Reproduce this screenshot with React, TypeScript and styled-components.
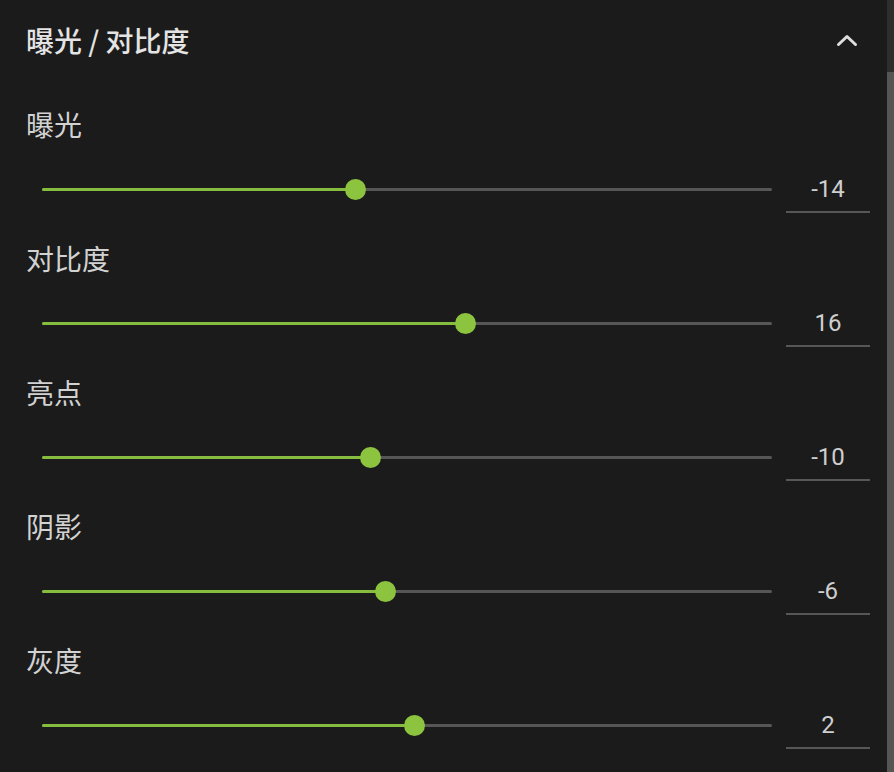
import React from "react";
import styled, { createGlobalStyle } from "styled-components";

const GlobalStyle = createGlobalStyle`
  html, body {
    margin: 0;
    padding: 0;
    background: #1b1b1b;
  }
  body {
    font-family: "Noto Sans CJK SC", "Noto Sans", sans-serif;
  }
`;

const adjustments = [
  { label: "曝光", value: -14 },
  { label: "对比度", value: 16 },
  { label: "亮点", value: -10 },
  { label: "阴影", value: -6 },
  { label: "灰度", value: 2 },
];

const Page = styled.div`
  display: flex;
  flex-flow: row nowrap;
  width: 894px;
  height: 772px;
  background: #1b1b1b;
  overflow: hidden;
`;

const Panel = styled.div`
  flex: 1;
  display: flex;
  flex-direction: column;
  padding: 0 17px 0 26px;
`;

const Header = styled.div`
  height: 82px;
  display: flex;
  align-items: center;
  justify-content: space-between;
  padding-bottom: 3px;
  box-sizing: border-box;
`;

const Title = styled.h2`
  margin: 0;
  font-size: 28px;
  font-weight: 500;
  color: #e4e4e4;
  line-height: 30px;
`;

const Chevron = styled.svg`
  width: 22px;
  height: 14px;
  margin-right: 12px;
`;

const Group = styled.div`
  height: 134px;
  display: flex;
  flex-direction: column;
`;

const Label = styled.div`
  margin-top: 27px;
  font-size: 28px;
  line-height: 30px;
  color: #d2d2d2;
`;

const SliderRow = styled.div`
  margin-top: 26px;
  display: flex;
  flex-flow: row nowrap;
  align-items: flex-start;
`;

const TrackArea = styled.div`
  flex: 1;
  height: 48px;
  margin: 0 14px 0 16px;
  display: flex;
  align-items: center;
`;

const Track = styled.div`
  position: relative;
  width: 100%;
  height: 3px;
  border-radius: 2px;
  background: #565656;
`;

const Fill = styled.div`
  height: 100%;
  border-radius: 2px;
  background: #86bd3e;
`;

const Thumb = styled.div`
  position: absolute;
  top: 50%;
  width: 21px;
  height: 21px;
  margin: -10.5px 0 0 -10.5px;
  border-radius: 50%;
  background: #8cc43f;
`;

const ValueBox = styled.div`
  width: 84px;
  height: 48px;
  box-sizing: border-box;
  padding-top: 12px;
  border-bottom: 2px solid #575757;
  text-align: center;
  font-family: Roboto, "Noto Sans", sans-serif;
  font-size: 24px;
  line-height: 24px;
  color: #cfcfcf;
`;

const Scrollbar = styled.div`
  width: 7px;
  display: flex;
  flex-direction: column;
  background: #2e2e2e;
`;

const ScrollThumb = styled.div`
  margin-top: 72px;
  flex: 1;
  background: #555555;
`;

const Slider = ({ value }: { value: number }) => {
  const pct = ((value + 100) / 200) * 100;
  return (
    <Track>
      <Fill style={{ width: `${pct}%` }} />
      <Thumb style={{ left: `${pct}%` }} />
    </Track>
  );
};

const App = () => {
  return (
    <>
      <GlobalStyle />
      <Page>
        <Panel>
          <Header>
            <Title>曝光 / 对比度</Title>
            <Chevron viewBox="0 0 22 14">
              <path
                d="M2.5 11.5 L11 3.5 L19.5 11.5"
                fill="none"
                stroke="#dedede"
                strokeWidth="3"
                strokeLinecap="round"
                strokeLinejoin="round"
              />
            </Chevron>
          </Header>
          {adjustments.map((a) => (
            <Group key={a.label}>
              <Label>{a.label}</Label>
              <SliderRow>
                <TrackArea>
                  <Slider value={a.value} />
                </TrackArea>
                <ValueBox>{a.value}</ValueBox>
              </SliderRow>
            </Group>
          ))}
        </Panel>
        <Scrollbar>
          <ScrollThumb />
        </Scrollbar>
      </Page>
    </>
  );
};

export default App;
